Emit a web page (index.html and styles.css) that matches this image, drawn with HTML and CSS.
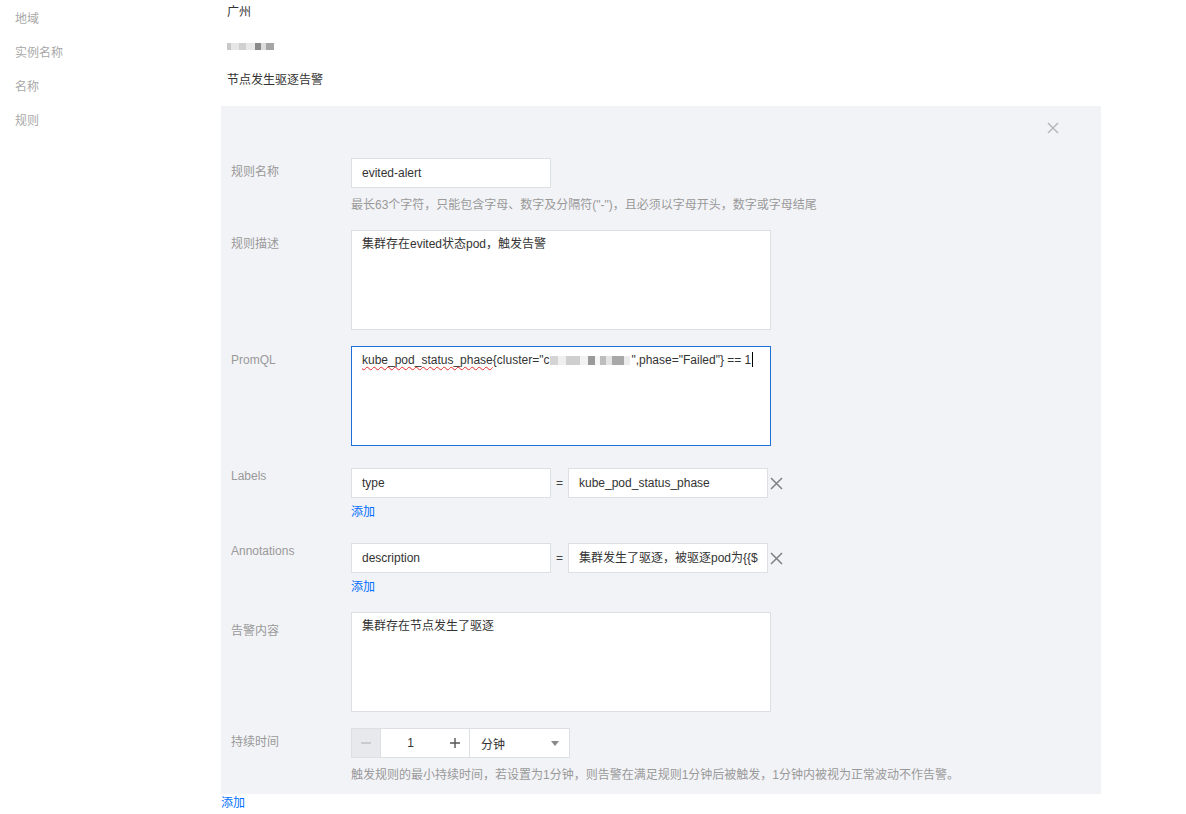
FILE: index.html
```html
<!DOCTYPE html>
<html lang="zh-CN">
<head>
<meta charset="utf-8">
<title>告警规则</title>
<link rel="stylesheet" href="styles.css">
</head>
<body>
<div class="page">
  <div class="side">
    <div class="side-label">地域</div>
    <div class="side-label">实例名称</div>
    <div class="side-label">名称</div>
    <div class="side-label">规则</div>
  </div>
  <div class="main">
    <div class="values">
      <div class="value">广州</div>
      <div class="value"><span class="blur blur-top"></span></div>
      <div class="value">节点发生驱逐告警</div>
    </div>
    <div class="panel">
      <div class="panel-head">
        <span class="close" aria-label="关闭">
          <svg width="12" height="12" viewBox="0 0 12 12"><path d="M1 1L11 11M11 1L1 11" stroke="#b5b8bd" stroke-width="1.5"/></svg>
        </span>
      </div>
      <div class="form">
        <div class="row">
          <div class="label">规则名称</div>
          <div class="ctrl">
            <div class="input w200">evited-alert</div>
            <div class="help">最长63个字符，只能包含字母、数字及分隔符("-")，且必须以字母开头，数字或字母结尾</div>
          </div>
        </div>
        <div class="row">
          <div class="label">规则描述</div>
          <div class="ctrl">
            <div class="textarea">集群存在evited状态pod，触发告警</div>
          </div>
        </div>
        <div class="row">
          <div class="label">PromQL</div>
          <div class="ctrl">
            <div class="textarea focus"><span class="spell">kube_pod_status_phase</span>{cluster="c<span class="blur blur-q"></span>",phase="Failed"} == 1<span class="caret"></span></div>
          </div>
        </div>
        <div class="row kv-row">
          <div class="label label-kv">Labels</div>
          <div class="ctrl">
            <div class="kv">
              <div class="input w200">type</div>
              <span class="eq">=</span>
              <div class="input w200">kube_pod_status_phase</div>
              <span class="del">
                <svg width="13" height="13" viewBox="0 0 13 13"><path d="M1 1L12 12M12 1L1 12" stroke="#7d8087" stroke-width="1.5"/></svg>
              </span>
            </div>
            <a class="link add">添加</a>
          </div>
        </div>
        <div class="row kv-row">
          <div class="label label-kv">Annotations</div>
          <div class="ctrl">
            <div class="kv">
              <div class="input w200">description</div>
              <span class="eq">=</span>
              <div class="input w200">集群发生了驱逐，被驱逐pod为{{$</div>
              <span class="del">
                <svg width="13" height="13" viewBox="0 0 13 13"><path d="M1 1L12 12M12 1L1 12" stroke="#7d8087" stroke-width="1.5"/></svg>
              </span>
            </div>
            <a class="link add">添加</a>
          </div>
        </div>
        <div class="row">
          <div class="label label-content">告警内容</div>
          <div class="ctrl">
            <div class="textarea">集群存在节点发生了驱逐</div>
          </div>
        </div>
        <div class="row">
          <div class="label">持续时间</div>
          <div class="ctrl">
            <div class="stepper">
              <span class="step-btn minus">
                <svg width="12" height="12" viewBox="0 0 12 12"><path d="M1 6H11" stroke="#b9bcc2" stroke-width="1.3"/></svg>
              </span>
              <span class="step-num">1</span>
              <span class="step-btn plus">
                <svg width="12" height="12" viewBox="0 0 12 12"><path d="M1 6H11M6 1V11" stroke="#555" stroke-width="1.4"/></svg>
              </span>
              <span class="select">分钟<span class="arrow"></span></span>
            </div>
            <div class="help help-time">触发规则的最小持续时间，若设置为1分钟，则告警在满足规则1分钟后被触发，1分钟内被视为正常波动不作告警。</div>
          </div>
        </div>
      </div>
    </div>
    <a class="link bottom-add">添加</a>
  </div>
</div>
</body>
</html>
```

FILE: styles.css
```css
* { box-sizing: border-box; }
html, body { margin: 0; padding: 0; background: #fff; }
body {
  font-family: "Liberation Sans", "Noto Sans CJK SC", sans-serif;
  font-size: 12px;
  color: #333;
}
.page {
  display: flex;
  width: 1186px;
  height: 814px;
  overflow: hidden;
}
.side {
  width: 221px;
  padding: 9px 0 0 15px;
  display: flex;
  flex-direction: column;
  gap: 14px;
}
.side-label {
  line-height: 20px;
  color: #a8a8a8;
}
.main {
  display: flex;
  flex-direction: column;
}
.values {
  padding: 2px 0 0 6px;
  display: flex;
  flex-direction: column;
  gap: 14px;
}
.value {
  line-height: 20px;
  height: 20px;
  color: #333;
  display: flex;
  align-items: center;
}
.blur {
  display: inline-block;
  vertical-align: middle;
}
.blur-top {
  width: 47px;
  height: 7px;
  background: linear-gradient(90deg, #c8c8c8 0 8%, #e6e6e6 8% 25%, #d0d0d0 25% 40%, #e8e8e8 40% 60%, #8a8a8a 60% 72%, #dcdcdc 72% 84%, #a5a5a5 84% 100%);
}
.panel {
  margin-top: 16px;
  width: 880px;
  height: 688px;
  background: #f2f3f7;
  padding: 12px 0 0 10px;
}
.panel-head {
  display: flex;
  justify-content: flex-end;
  height: 20px;
  padding-right: 42px;
  align-items: center;
}
.close { display: flex; }
.form {
  margin-top: 20px;
  display: flex;
  flex-direction: column;
  gap: 16px;
}
.row {
  display: flex;
}
.kv-row { margin-top: 6px; }
.label {
  width: 120px;
  flex-shrink: 0;
  color: #999;
  line-height: 28px;
}
.label-kv { line-height: 16px; }
.label-content { padding-top: 5px; }
.ctrl {
  display: flex;
  flex-direction: column;
}
.input {
  height: 30px;
  border: 1px solid #dcdfe4;
  background: #fff;
  padding: 0 10px;
  line-height: 28px;
  color: #333;
  white-space: nowrap;
  overflow: hidden;
}
.w200 { width: 200px; }
.help {
  margin-top: 8px;
  line-height: 18px;
  color: #999;
}
.help-time { margin-top: 8px; }
.textarea {
  width: 420px;
  height: 100px;
  border: 1px solid #dcdfe4;
  background: #fff;
  padding: 5px 10px;
  line-height: 16px;
  color: #333;
  white-space: nowrap;
}
.textarea.focus { border-color: #1f6fd9; }
.spell {
  text-decoration: underline wavy #e0302b;
  text-decoration-thickness: 1px;
  text-underline-offset: 2px;
}
.blur-q {
  width: 80px;
  height: 9px;
  margin: 0 1px;
  background: linear-gradient(90deg, #d4d4d4 0 10%, #efefef 10% 20%, #cfcfcf 20% 38%, #f2f2f2 38% 48%, #9a9a9a 48% 56%, #f6f6f6 56% 62%, #bdbdbd 62% 70%, #e4e4e4 70% 78%, #a8a8a8 78% 92%, #ececec 92% 100%);
}
.caret {
  display: inline-block;
  width: 1px;
  height: 15px;
  background: #000;
  vertical-align: -3px;
  margin-left: 1px;
}
.kv {
  display: flex;
  align-items: center;
}
.eq {
  width: 17px;
  text-align: center;
  color: #444;
}
.del {
  display: flex;
  margin-left: 2px;
}
.link {
  color: #006eff;
  cursor: pointer;
  text-decoration: none;
}
.add {
  margin-top: 5px;
  line-height: 18px;
}
.stepper {
  display: flex;
  height: 30px;
}
.step-btn {
  width: 30px;
  height: 30px;
  border: 1px solid #dcdfe4;
  display: flex;
  align-items: center;
  justify-content: center;
  background: #fff;
}
.minus { background: #e7e9ed; }
.plus { border-left: none; }
.step-num {
  width: 59px;
  height: 30px;
  border-top: 1px solid #dcdfe4;
  border-bottom: 1px solid #dcdfe4;
  display: flex;
  align-items: center;
  justify-content: center;
  background: #fff;
  color: #333;
}
.select {
  width: 100px;
  height: 30px;
  border: 1px solid #dcdfe4;
  border-left: none;
  background: #fff;
  display: flex;
  align-items: center;
  justify-content: space-between;
  padding: 0 10px 0 11px;
  color: #333;
}
.arrow {
  width: 0;
  height: 0;
  border-left: 4px solid transparent;
  border-right: 4px solid transparent;
  border-top: 5px solid #888;
}
.bottom-add {
  line-height: 16px;
  margin-top: 1px;
}
```
